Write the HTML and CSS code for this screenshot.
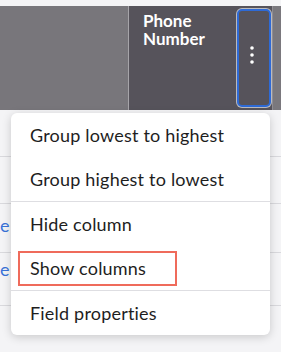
FILE: index.html
```html
<!DOCTYPE html>
<html lang="en">
<head>
    <meta charset="UTF-8">
    <meta name="viewport" content="width=device-width, initial-scale=1.0">
    <title>Column menu</title>
    <link rel="stylesheet" href="styles.css">
</head>
<body>

    <div class="grid">
        <!-- Header -->
        <div class="header">
            <div class="col col-left"></div>
            <div class="col col-phone">
                <span class="col-title">Phone<br>Number</span>
                <button class="col-menu-btn" aria-label="Column options">
                    <svg width="6" height="20" viewBox="0 0 6 20">
                        <circle cx="3" cy="3" r="1.8" fill="#fff"/>
                        <circle cx="3" cy="10" r="1.8" fill="#fff"/>
                        <circle cx="3" cy="17" r="1.8" fill="#fff"/>
                    </svg>
                </button>
            </div>
            <div class="col col-right"></div>
        </div>

        <!-- Rows -->
        <div class="row row-1"><span class="cell-link"></span></div>
        <div class="row row-2"><span class="cell-link"></span></div>
        <div class="row row-3"><span class="cell-link">e</span></div>
        <div class="row row-4"><span class="cell-link">e</span></div>

        <!-- Dropdown -->
        <div class="dropdown">
            <div class="menu-group">
                <div class="menu-item">Group lowest to highest</div>
                <div class="menu-item">Group highest to lowest</div>
            </div>
            <div class="menu-group">
                <div class="menu-item">Hide column</div>
                <div class="menu-item highlighted"><span>Show columns</span></div>
            </div>
            <div class="menu-group">
                <div class="menu-item">Field properties</div>
            </div>
        </div>
    </div>

</body>
</html>
```

FILE: styles.css
```css
body {
    margin: 0;
    font-family: 'Lato', sans-serif;
    background-color: #fff;
    color: #222;
}

.grid {
    position: relative;
    padding-top: 6px;
    background-color: #f4f4f6;
    height: 346px;
    overflow: hidden;
}

.header {
    display: flex;
    height: 104px;
}

.col-left {
    width: 128px;
    background-color: #78767b;
    border-right: 1px solid #a6a4a9;
}

.col-phone {
    width: 143px;
    background-color: #56535b;
    display: flex;
    justify-content: space-between;
    align-items: stretch;
}

.col-title {
    color: #fff;
    font-weight: bold;
    font-size: 17px;
    line-height: 18px;
    padding: 6px 0 0 14px;
}

.col-menu-btn {
    width: 34px;
    margin: 3px 1px 3px 0;
    padding: 0;
    background-color: #56535b;
    border: 2px solid #2e6ad6;
    border-radius: 5px;
    box-shadow: 0 0 0 1px rgba(255, 255, 255, 0.6);
    display: flex;
    align-items: center;
    justify-content: center;
}

.col-menu-btn svg {
    margin: 0 4px 6px 0;
}

.col-right {
    flex: 1;
    background-color: #7a787d;
    border-left: 1px solid #8f8d92;
}

.row {
    border-bottom: 1px solid #d9d9dd;
    box-sizing: border-box;
}

.row-1 { height: 47px; }
.row-2 { height: 47px; }
.row-3 { height: 49px; padding-top: 11px; }
.row-4 { height: 53px; padding-top: 6px; }

.cell-link {
    display: block;
    color: #3a72d8;
    font-size: 18px;
    line-height: 20px;
}

.dropdown {
    position: absolute;
    left: 11px;
    top: 113px;
    width: 259px;
    background-color: #fff;
    border-radius: 6px;
    box-shadow: 0 2px 10px rgba(0, 0, 0, 0.18);
}

.menu-group {
    border-bottom: 1px solid #dedee2;
}

.menu-group:last-child {
    border-bottom: none;
}

.menu-item {
    height: 44px;
    padding-left: 19px;
    display: flex;
    align-items: center;
    font-size: 18px;
    letter-spacing: 0.2px;
    color: #1e1e1e;
}

.highlighted {
    padding-left: 7px;
}

.highlighted span {
    box-sizing: border-box;
    width: 159px;
    height: 35px;
    display: flex;
    align-items: center;
    border: 2px solid #ef6b5b;
    padding-left: 10px;
}
```
